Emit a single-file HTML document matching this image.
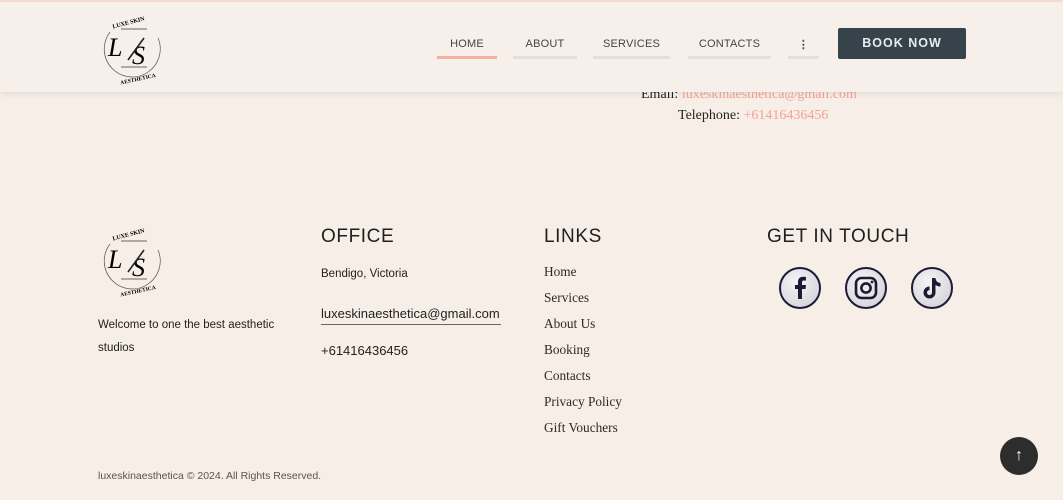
<!DOCTYPE html>
<html><head><meta charset="utf-8"><style>
*{margin:0;padding:0;box-sizing:border-box}
body{width:1063px;height:500px;overflow:hidden;background:#f6eee7;font-family:"Liberation Sans",sans-serif;position:relative;color:#222}
.hdr{position:absolute;left:0;top:0;width:1063px;height:92px;background:#f7efe9;border-top:2px solid #f3dccf;box-shadow:0 2px 6px rgba(0,0,0,.07);z-index:2}
.nav a{position:absolute;top:36px;height:21px;font-size:11px;color:#444;text-align:center;border-bottom:3px solid #e6ded8;letter-spacing:.2px}
.book{position:absolute;left:838px;top:26px;width:128px;height:31px;background:#37434b;color:#e9ecef;font-size:12.5px;font-weight:bold;letter-spacing:1px;text-align:center;line-height:31px;border-radius:2px}
.abs{position:absolute}
.serif{font-family:"Liberation Serif",serif}
.h{font-size:19px;letter-spacing:.6px;color:#1f1f1f}
.lk{position:absolute;left:544px;font-size:13.3px;color:#2a2a2a;font-family:"Liberation Serif",serif}
.soc{position:absolute;top:267px;width:42px;height:42px;border-radius:50%;border:2px solid #1d1b33;background:radial-gradient(circle at 40% 35%,#f4f3f5,#cfcdd4);}
</style></head><body>
<div class="hdr">
<svg class="abs" style="left:100px;top:8px" width="66" height="76" viewBox="0 0 66 76">
<path d="M10 22 A28 28 0 1 0 58 28" fill="none" stroke="#555" stroke-width="0.7"/>
<text x="12" y="14" font-size="6" font-family="Liberation Serif" font-weight="bold" transform="rotate(-15 30 12)">LUXE SKIN</text>
<text x="20" y="72" font-size="5.5" font-family="Liberation Serif" font-weight="bold" transform="rotate(-12 32 70)">AESTHETICA</text>
<line x1="21" y1="19" x2="47" y2="19" stroke="#666"/><line x1="21" y1="57" x2="47" y2="57" stroke="#666"/>
<text x="8" y="46" font-size="26" font-style="italic" font-family="Liberation Serif">L</text>
<text x="32" y="54" font-size="26" font-style="italic" font-family="Liberation Serif">S</text>
<line x1="28" y1="50" x2="44" y2="28" stroke="#222" stroke-width="1.6"/>
</svg>
<div class="nav">
<a style="left:437px;width:60px;border-color:#f3b0a0">HOME</a>
<a style="left:513px;width:64px">ABOUT</a>
<a style="left:593px;width:77px">SERVICES</a>
<a style="left:688px;width:83px">CONTACTS</a>
<a style="left:788px;width:31px;font-weight:bold">⋮</a>
</div>
<div class="book">BOOK NOW</div>
</div>
<div class="abs serif" style="left:641px;top:87px;font-size:14px;color:#222">Email: <span style="color:#f2a393">luxeskinaesthetica@gmail.com</span></div>
<div class="abs serif" style="left:678px;top:108px;font-size:14px;color:#222">Telephone: <span style="color:#f2a393">+61416436456</span></div>

<svg class="abs" style="left:100px;top:222px" width="66" height="76" viewBox="0 0 66 76">
<path d="M10 22 A28 28 0 1 0 58 28" fill="none" stroke="#555" stroke-width="0.7"/>
<text x="12" y="14" font-size="6" font-family="Liberation Serif" font-weight="bold" transform="rotate(-15 30 12)">LUXE SKIN</text>
<text x="20" y="72" font-size="5.5" font-family="Liberation Serif" font-weight="bold" transform="rotate(-12 32 70)">AESTHETICA</text>
<line x1="21" y1="19" x2="47" y2="19" stroke="#666"/><line x1="21" y1="57" x2="47" y2="57" stroke="#666"/>
<text x="8" y="46" font-size="26" font-style="italic" font-family="Liberation Serif">L</text>
<text x="32" y="54" font-size="26" font-style="italic" font-family="Liberation Serif">S</text>
<line x1="28" y1="50" x2="44" y2="28" stroke="#222" stroke-width="1.6"/>
</svg>
<div class="abs" style="left:98px;top:314px;font-size:11.5px;line-height:23px;color:#222">Welcome to one the best aesthetic<br>studios</div>

<div class="abs h" style="left:321px;top:226px">OFFICE</div>
<div class="abs" style="left:321px;top:268px;font-size:11.5px">Bendigo, Victoria</div>
<div class="abs" style="left:321px;top:306px;font-size:13px;padding-bottom:3px;border-bottom:1.5px solid #666;width:180px">luxeskinaesthetica@gmail.com</div>
<div class="abs" style="left:321px;top:343px;font-size:13px">+61416436456</div>

<div class="abs h" style="left:544px;top:226px">LINKS</div>
<div class="lk" style="top:264px">Home</div>
<div class="lk" style="top:290px">Services</div>
<div class="lk" style="top:316px">About Us</div>
<div class="lk" style="top:342px">Booking</div>
<div class="lk" style="top:368px">Contacts</div>
<div class="lk" style="top:394px">Privacy Policy</div>
<div class="lk" style="top:420px">Gift Vouchers</div>

<div class="abs h" style="left:767px;top:226px">GET IN TOUCH</div>
<div class="soc" style="left:779px"><svg width="38" height="38" viewBox="0 0 38 38"><path d="M21 30V20h3.5l.5-4h-4v-2.5c0-1.2.4-2 2-2H25V8c-.4 0-1.6-.2-3-.2-3 0-5 1.8-5 5.2V16h-3v4h3v10z" fill="#1d1b33"/></svg></div>
<div class="soc" style="left:845px"><svg width="38" height="38" viewBox="0 0 38 38"><rect x="9" y="9" width="20" height="20" rx="5.5" fill="none" stroke="#1d1b33" stroke-width="2.6"/><circle cx="19" cy="19" r="4.6" fill="none" stroke="#1d1b33" stroke-width="2.6"/><circle cx="25" cy="13" r="1.4" fill="#1d1b33"/></svg></div>
<div class="soc" style="left:911px"><svg width="38" height="38" viewBox="0 0 38 38"><path d="M19 9h3.5c.3 3 2 4.8 5 5v3.5c-1.8 0-3.5-.5-5-1.5v7.5a6 6 0 1 1-6-6v3.6a2.5 2.5 0 1 0 2.5 2.5z" fill="#1d1b33"/></svg></div>

<div class="abs" style="left:98px;top:470px;font-size:10.5px;color:#555">luxeskinaesthetica © 2024. All Rights Reserved.</div>
<div class="abs" style="left:1000px;top:437px;width:38px;height:38px;border-radius:50%;background:#2d2d2d;color:#fff;text-align:center;line-height:38px;font-size:16px">↑</div>
</body></html>
